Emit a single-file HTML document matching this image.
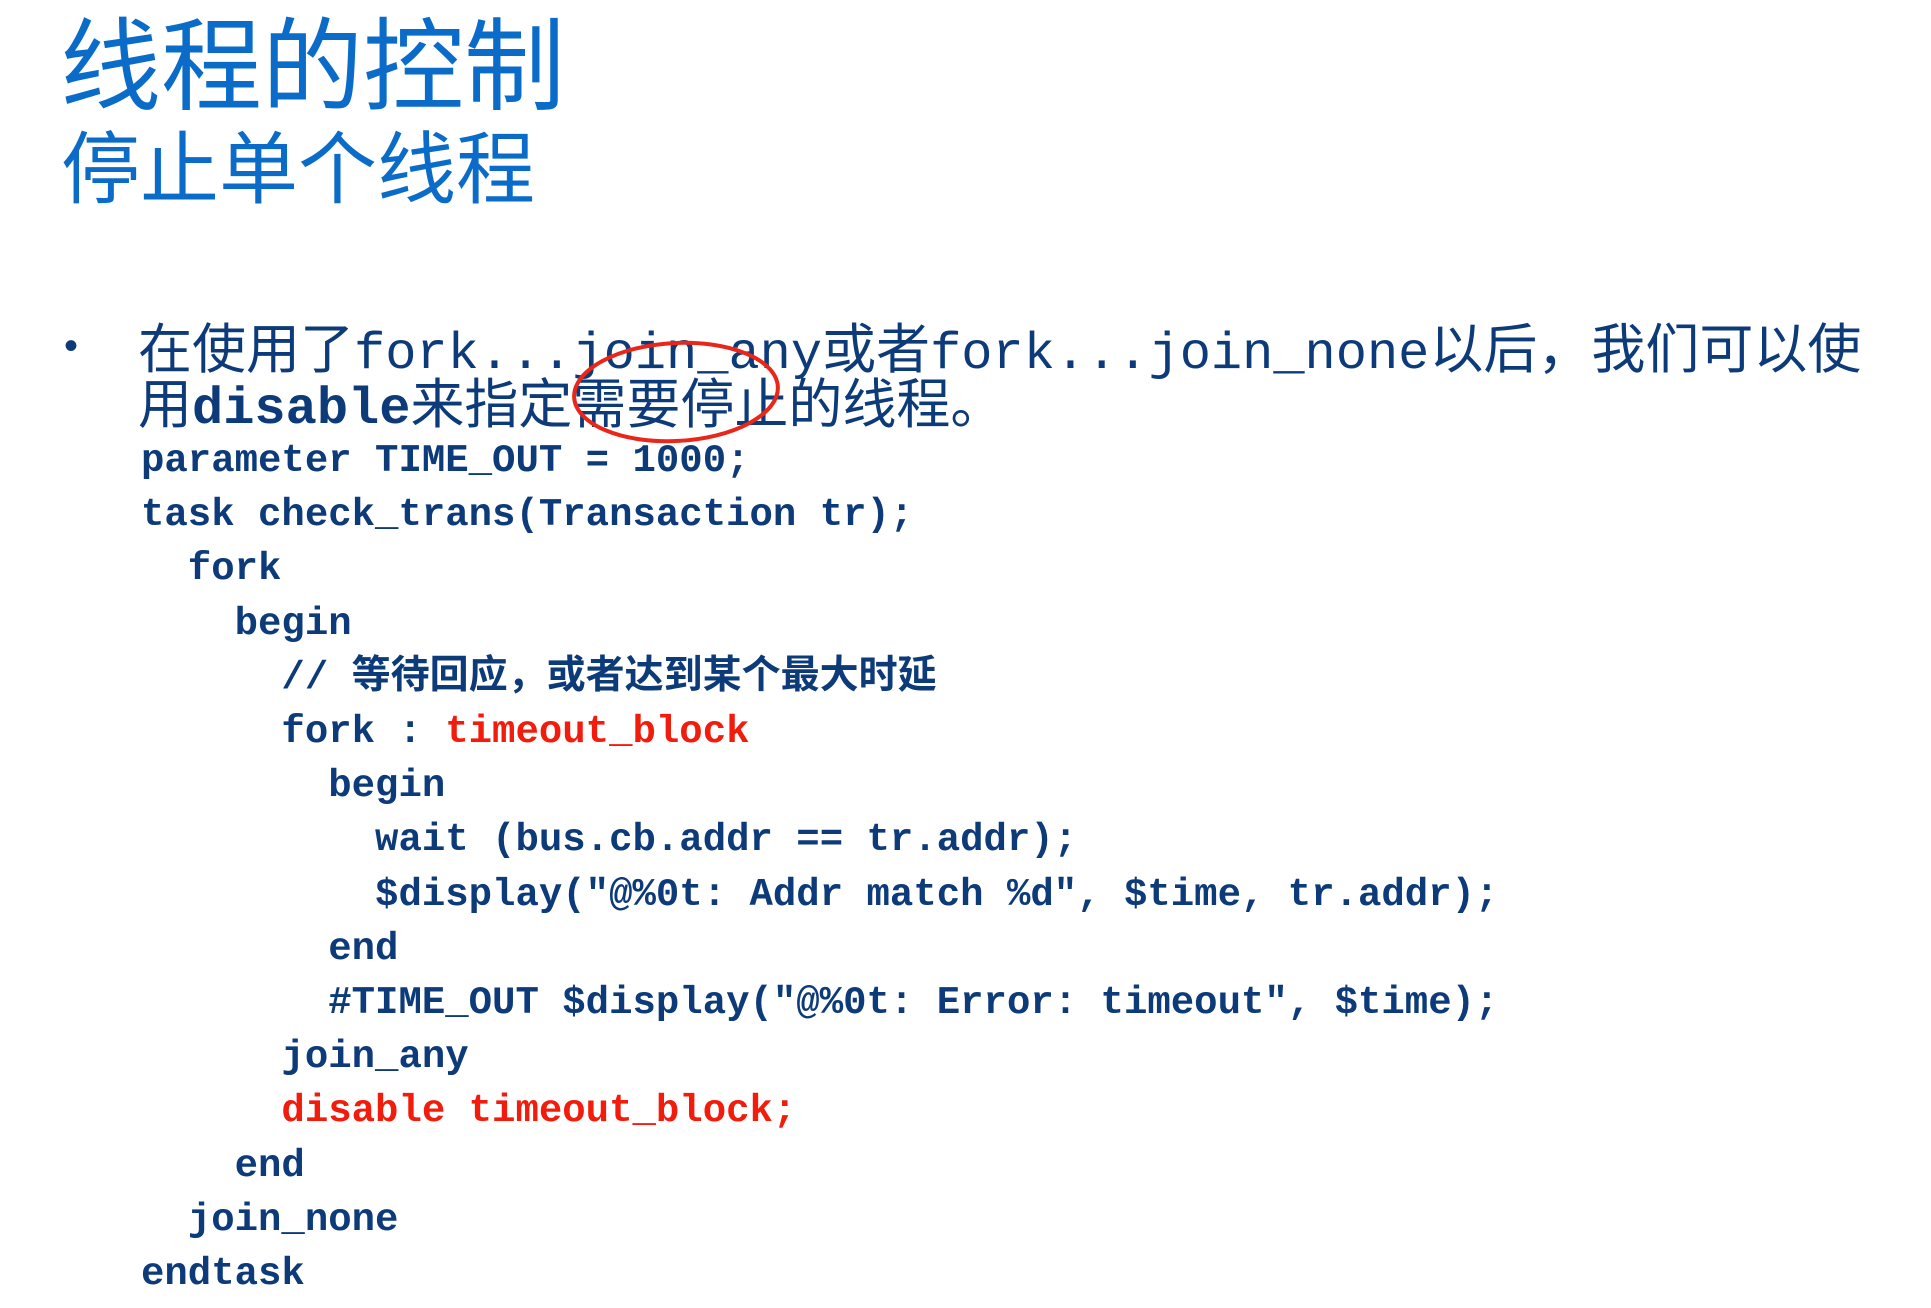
<!DOCTYPE html>
<html><head><meta charset="utf-8"><style>
html,body{margin:0;padding:0;background:#fff;width:1931px;height:1308px;overflow:hidden;position:relative}
.t{position:absolute;white-space:pre;font-family:"Liberation Sans","Noto Sans CJK SC",sans-serif;line-height:1}
.m{font-family:"Liberation Mono","Noto Sans CJK SC",monospace}
.c{position:absolute;left:141px;white-space:pre;font-family:"Liberation Mono","Noto Sans CJK SC",monospace;font-weight:bold;font-size:39px;line-height:55px;color:#0d3b7a}
.r{color:#f21c0c}
</style></head><body>
<div class="t" style="left:60px;top:18px;font-size:101px;color:#0a6cc8">线程的控制</div>
<div class="t" style="left:61px;top:130px;font-size:79px;color:#0a6cc8">停止单个线程</div>
<div class="t" style="left:64px;top:326px;font-size:40px;color:#0d3b7a">•</div>
<div class="t" style="left:138px;top:323px;font-size:54px;color:#0d3b7a">在使用了<span class="m" style="font-size:52px">fork...join_any</span>或者<span class="m" style="font-size:52px">fork...join_none</span>以后，我们可以使</div>
<div class="t" style="left:138px;top:378px;font-size:54px;color:#0d3b7a">用<span class="m" style="font-size:52px;font-weight:bold">disable</span>来指定需要停止的线程。</div>
<svg style="position:absolute;left:0;top:0" width="1931" height="1308"><ellipse cx="676" cy="392" rx="102" ry="49" fill="none" stroke="#e8271a" stroke-width="4" transform="rotate(-3 676 392)"/></svg>
<div class="c" style="top:434px">parameter TIME_OUT = 1000;</div>
<div class="c" style="top:488px">task check_trans(Transaction tr);</div>
<div class="c" style="top:542px">  fork</div>
<div class="c" style="top:597px">    begin</div>
<div class="c" style="top:651px">      // 等待回应，或者达到某个最大时延</div>
<div class="c" style="top:705px">      fork : <span class="r">timeout_block</span></div>
<div class="c" style="top:759px">        begin</div>
<div class="c" style="top:813px">          wait (bus.cb.addr == tr.addr);</div>
<div class="c" style="top:868px">          $display("@%0t: Addr match %d", $time, tr.addr);</div>
<div class="c" style="top:922px">        end</div>
<div class="c" style="top:976px">        #TIME_OUT $display("@%0t: Error: timeout", $time);</div>
<div class="c" style="top:1030px">      join_any</div>
<div class="c r" style="top:1084px">      disable timeout_block;</div>
<div class="c" style="top:1139px">    end</div>
<div class="c" style="top:1193px">  join_none</div>
<div class="c" style="top:1247px">endtask</div>
</body></html>
